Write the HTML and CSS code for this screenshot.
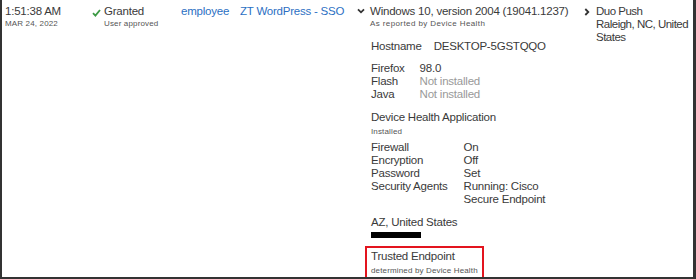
FILE: index.html
```html
<!DOCTYPE html>
<html lang="en">
<head>
    <meta charset="UTF-8">
    <meta name="viewport" content="width=device-width, initial-scale=1.0">
    <title>Authentication Log</title>
    <link rel="stylesheet" href="styles.css">
</head>
<body>

<div class="frame">
    <div class="log-row">
        <!-- Fecha y hora -->
        <div class="col col-time">
            <div class="line">1:51:38 AM</div>
            <div class="note caps">MAR 24, 2022</div>
        </div>

        <!-- Resultado -->
        <div class="col col-result">
            <svg class="check" width="9" height="8" viewBox="0 0 9 8">
                <polyline points="1,4.2 3.4,6.6 8,1" fill="none" stroke="#3c9a45" stroke-width="1.8"/>
            </svg>
            <div>
                <div class="line">Granted</div>
                <div class="note">User approved</div>
            </div>
        </div>

        <div class="col col-user">
            <a href="#" class="line link">employee</a>
        </div>

        <div class="col col-app">
            <a href="#" class="line link">ZT WordPress - SSO</a>
        </div>

        <!-- Dispositivo -->
        <div class="col col-device">
            <svg class="chevron-down" width="8" height="6" viewBox="0 0 8 6">
                <polyline points="1,1.3 4,4.3 7,1.3" fill="none" stroke="#333" stroke-width="1.8"/>
            </svg>
            <div class="device-body">
                <div class="line">Windows 10, version 2004 (19041.1237)</div>
                <div class="note note-wide">As reported by Device Health</div>

                <div class="pairs pairs-host">
                    <span>Hostname</span><span>DESKTOP-5GSTQQO</span>
                </div>

                <div class="pairs pairs-browser">
                    <span>Firefox</span><span>98.0</span>
                    <span>Flash</span><span class="muted">Not installed</span>
                    <span>Java</span><span class="muted">Not installed</span>
                </div>

                <div class="section-title">Device Health Application</div>
                <div class="note">Installed</div>

                <div class="pairs pairs-health">
                    <span>Firewall</span><span>On</span>
                    <span>Encryption</span><span>Off</span>
                    <span>Password</span><span>Set</span>
                    <span>Security Agents</span><span>Running: Cisco Secure Endpoint</span>
                </div>

                <div class="location">AZ, United States</div>
                <div class="redacted"></div>

                <div class="trusted">
                    <div class="line">Trusted Endpoint</div>
                    <div class="note">determined by Device Health</div>
                </div>
            </div>
        </div>

        <!-- Factor de autenticación -->
        <div class="col col-factor">
            <svg class="chevron-right" width="6" height="8" viewBox="0 0 6 8">
                <polyline points="1.3,1 4.3,4 1.3,7" fill="none" stroke="#333" stroke-width="1.8"/>
            </svg>
            <div class="factor-body">
                <div class="line">Duo Push</div>
                <div class="line"><span class="nowrap">Raleigh, NC, United</span> States</div>
            </div>
        </div>
    </div>
</div>

</body>
</html>
```

FILE: styles.css
```css
body {
    margin: 0;
    padding: 0;
    background-color: #fff;
    font-family: "Liberation Sans", Arial, sans-serif;
    font-size: 11.5px;
    line-height: 13px;
    letter-spacing: -0.22px;
    color: #3a3a3a;
}

.frame {
    width: 696px;
    height: 279px;
    box-sizing: border-box;
    border-left: 2px solid #333;
    border-right: 3px solid #333;
    border-bottom: 2px solid #333;
    overflow: hidden;
}

.log-row {
    display: flex;
    padding-top: 5px;
    padding-left: 3px;
}

.col {
    flex-shrink: 0;
}

.line {
    display: block;
}

.nowrap {
    white-space: nowrap;
}

.note {
    font-size: 8px;
    line-height: 12px;
    letter-spacing: 0.15px;
    color: #555;
}

.note-wide {
    letter-spacing: 0.4px;
}

.caps {
    text-transform: uppercase;
}

.link {
    color: #2b6fc3;
    text-decoration: none;
}

.muted {
    color: #999;
}

.col-time {
    width: 87px;
}

.col-result {
    width: 89px;
    display: flex;
    gap: 3px;
}

.check {
    margin-top: 4px;
}

.col-user {
    width: 59px;
}

.col-app {
    width: 116px;
}

.col-device {
    width: 227px;
    display: flex;
    gap: 5px;
}

.chevron-down {
    margin-top: 3px;
    margin-left: 1px;
}

.device-body {
    flex: 1;
}

.pairs {
    display: grid;
    grid-template-columns: auto auto;
    justify-content: start;
    column-gap: 15px;
    margin-left: 1px;
}

.pairs-host {
    column-gap: 12px;
    margin-top: 10px;
}

.pairs-browser {
    margin-top: 9px;
}

.pairs-health {
    grid-template-columns: auto 100px;
    column-gap: 16px;
    margin-top: 3px;
}

.section-title {
    margin-top: 10px;
    margin-left: 1px;
}

.section-title + .note {
    margin-top: 2px;
    margin-left: 1px;
}

.location {
    margin-top: 10px;
    margin-left: 1px;
}

.redacted {
    width: 50px;
    height: 6px;
    margin-top: 3px;
    margin-left: 1px;
    background-color: #000;
}

.trusted {
    width: fit-content;
    margin-top: 8px;
    margin-left: -5px;
    padding: 2px 4px 6px 4px;
    border: 2px solid #e3141e;
}

.trusted .note {
    margin-top: 2px;
}

.col-factor {
    flex: 1;
    display: flex;
    gap: 6px;
    margin-left: 1px;
}

.chevron-right {
    margin-top: 3px;
}

.factor-body {
    flex: 1;
    letter-spacing: -0.5px;
}
```
